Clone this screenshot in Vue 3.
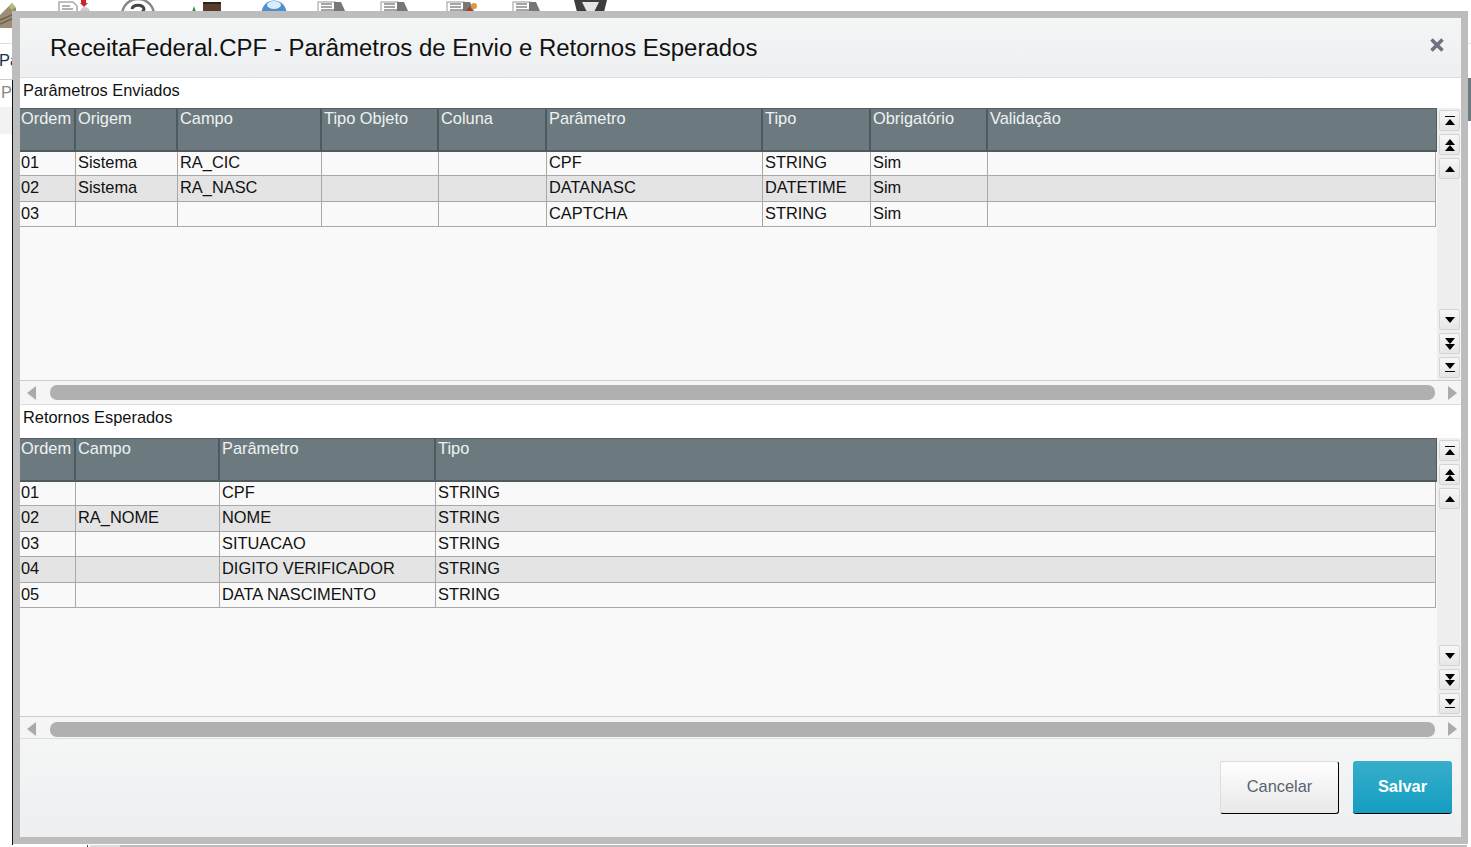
<script setup>
const sent = {
  cols: [56, 102, 144, 117, 108, 216, 108, 117, 448],
  head: ['Ordem', 'Origem', 'Campo', 'Tipo Objeto', 'Coluna', 'Parâmetro', 'Tipo', 'Obrigatório', 'Validação'],
  rows: [
    ['01', 'Sistema', 'RA_CIC', '', '', 'CPF', 'STRING', 'Sim', ''],
    ['02', 'Sistema', 'RA_NASC', '', '', 'DATANASC', 'DATETIME', 'Sim', ''],
    ['03', '', '', '', '', 'CAPTCHA', 'STRING', 'Sim', '']
  ]
}

const expected = {
  cols: [56, 144, 216, 1000],
  head: ['Ordem', 'Campo', 'Parâmetro', 'Tipo'],
  rows: [
    ['01', '', 'CPF', 'STRING'],
    ['02', 'RA_NOME', 'NOME', 'STRING'],
    ['03', '', 'SITUACAO', 'STRING'],
    ['04', '', 'DIGITO VERIFICADOR', 'STRING'],
    ['05', '', 'DATA NASCIMENTO', 'STRING']
  ]
}

const panels = [
  { title: 'Parâmetros Enviados', table: sent, height: 272 },
  { title: 'Retornos Esperados', table: expected, height: 278 }
]

const gridCols = (cols) => cols.map((c) => c + 'px').join(' ')
</script>

<template>
  <div class="page">
    <!-- what shows around the dialog -->
    <div class="backdrop">
      <svg class="toolbar" width="620" height="32" viewBox="0 0 620 32">
        <path d="M0 15 12 3l4 5v20L0 28z" fill="#9c8d74" />
        <path d="M9 7l3-4 3 4-3 3z" fill="#a9c46c" />
        <path d="M0 20l14-6M0 24l14-6" stroke="#6f6350" stroke-width="1.5" />

        <path d="M59 12V2h14l4 4v6" fill="#fff" stroke="#aaa" stroke-width="1.5" />
        <path d="M62 6h8M62 9h11" stroke="#999" stroke-width="1.5" />
        <path d="M81 0h5v3h2l-4 4-4-4h1z" fill="#c8262c" />
        <circle cx="85" cy="12" r="5" fill="#ccc" />

        <circle cx="138" cy="15" r="16" fill="#fff" stroke="#888" stroke-width="2.5" />
        <path d="M132 9c1-5 11-5 12 0 0 2-2 3-3 4" fill="none" stroke="#444" stroke-width="3" />

        <path d="M192 12l2-6 2 6z" fill="#3c8a3c" />
        <rect x="203" y="2" width="18" height="10" fill="#5b3d2b" />
        <rect x="203" y="2" width="18" height="2" fill="#2d2520" />

        <circle cx="274" cy="13" r="12.5" fill="#4f8fd0" />
        <ellipse cx="274" cy="5" rx="7" ry="4" fill="#dcecf8" />

        <g v-for="x in [318, 381, 447, 513]" :key="x">
          <path :d="`M${x} 12V2h17l4 6v4`" fill="#fff" stroke="#bbb" stroke-width="1.5" />
          <path :d="`M${x + 3} 4h11M${x + 3} 7h11M${x + 3} 10h13`" stroke="#888" stroke-width="1.3" />
          <path :d="`M${x + 16} 2l7 0 4 9h-11z`" fill="#777" />
        </g>
        <path d="M465 12l5-6 3 6z" fill="#b33a24" />
        <circle cx="474" cy="6" r="3" fill="#d99a3a" />

        <path d="M574 0h33l-3 12h-27z" fill="#3e3e3e" />
        <path d="M582 2h17l-5 10h-7z" fill="#e4e4e4" />
      </svg>
      <div class="hline top-left"></div>
      <div class="tab-text">Pa</div>
      <div class="hline mid-left"></div>
      <div class="search-text">P</div>
      <div class="side-block"></div>
      <div class="hline top-right"></div>
      <div class="side-head"></div>
      <div class="bottom-edge"></div>
    </div>

    <div class="modal">
      <header class="modal-head">
        <h1>ReceitaFederal.CPF - Parâmetros de Envio e Retornos Esperados</h1>
        <svg class="close" width="14" height="14" viewBox="0 0 14 14">
          <path d="M1.5 1.5l11 11M12.5 1.5l-11 11" stroke="#6b7380" stroke-width="3.6" />
        </svg>
      </header>

      <section v-for="(p, n) in panels" :key="p.title" class="panel" :class="{ second: n === 1 }">
        <div class="panel-title">{{ p.title }}</div>
        <div class="browse" :style="{ height: p.height + 'px' }">
          <div class="grid">
            <div class="row head" :style="{ gridTemplateColumns: gridCols(p.table.cols) }">
              <div v-for="h in p.table.head" :key="h" class="cell">{{ h }}</div>
            </div>
            <div
              v-for="(r, i) in p.table.rows"
              :key="i"
              class="row"
              :class="{ odd: i % 2 === 1 }"
              :style="{ gridTemplateColumns: gridCols(p.table.cols) }"
            >
              <div v-for="(c, j) in r" :key="j" class="cell">{{ c }}</div>
            </div>
          </div>
          <div class="vscroll">
            <div class="btn-group">
              <button class="sb"><span class="tri up bar-top"></span></button>
              <button class="sb"><span class="tri up"></span><span class="tri up"></span></button>
              <button class="sb"><span class="tri up"></span></button>
            </div>
            <div class="btn-group">
              <button class="sb"><span class="tri down"></span></button>
              <button class="sb"><span class="tri down"></span><span class="tri down"></span></button>
              <button class="sb"><span class="tri down bar-bottom"></span></button>
            </div>
          </div>
        </div>
        <div class="hscroll">
          <span class="arrow left"></span>
          <div class="thumb"></div>
          <span class="arrow right"></span>
        </div>
      </section>

      <footer class="modal-foot">
        <button class="btn cancel">Cancelar</button>
        <button class="btn save">Salvar</button>
      </footer>
    </div>
    <div class="modal-edge"></div>
  </div>
</template>

<style>
html, body {
  margin: 0;
  background: #fff;
  overflow: hidden;
}
</style>

<style scoped>
.page {
  position: relative;
  width: 1471px;
  height: 847px;
  overflow: hidden;
  font-family: "Liberation Sans", Arial, sans-serif;
  font-size: 16.4px;
  color: #111;
}
.backdrop > * {
  position: absolute;
}
.toolbar {
  left: 0;
  top: 0;
}
.hline {
  height: 1px;
  background: #ddd;
}
.top-left {
  left: 0;
  top: 43px;
  width: 12px;
}
.mid-left {
  left: 0;
  top: 79px;
  width: 12px;
  background: #ccc;
}
.top-right {
  left: 1467px;
  top: 43px;
  width: 4px;
}
.tab-text {
  left: -1px;
  top: 51px;
  color: #14324a;
}
.search-text {
  left: 1px;
  top: 83px;
  color: #888;
}
.side-block {
  left: 0;
  top: 107px;
  width: 12px;
  height: 27px;
  background: #f2f2f2;
}
.side-head {
  left: 1467px;
  top: 78px;
  width: 4px;
  height: 43px;
  background: #6c7a7f;
}
.bottom-edge {
  left: 87px;
  top: 845px;
  width: 1380px;
  height: 2px;
  background: linear-gradient(90deg, #444 1px, #fff 1px, #fff 3px, #ddd 3px, #ddd 33px, #bdbdbd 33px);
}
.modal {
  position: absolute;
  left: 12px;
  top: 11px;
  width: 1441px;
  height: 819px;
  display: flex;
  flex-direction: column;
  border: 7px solid #bdbdbd;
  border-left-width: 8px;
  background: #f9f9f9;
}
.modal-edge {
  position: absolute;
  left: 12px;
  top: 80px;
  width: 1px;
  height: 765px;
  background: #111;
}
.modal-head {
  height: 59px;
  flex: none;
  display: flex;
  align-items: center;
  justify-content: space-between;
  padding: 0 17px 0 30px;
  background: linear-gradient(#f4f5f5, #eeeff1);
  border-bottom: 1px solid #ddd;
}
.modal-head h1 {
  margin: 0;
  font-size: 23.97px;
  font-weight: 400;
  color: #111;
}
.close {
  margin-top: -6px;
}
.panel {
  flex: none;
}
.panel-title {
  height: 30px;
  line-height: 25px;
  padding-left: 3px;
  background: #fff;
}
.second .panel-title {
  height: 33px;
}
.browse {
  display: flex;
  background: #f9f9f9;
}
.grid {
  width: 1417px;
  flex: none;
}
.row {
  display: grid;
  height: 25.4px;
  box-sizing: border-box;
  border-bottom: 1px solid #a8a8a8;
  border-right: 1px solid #a8a8a8;
  margin-right: 1px;
  background: #f9f9f9;
}
.row.odd {
  background: #e4e4e4;
}
.row.head {
  position: relative;
  height: 44px;
  margin: 0 0 -1px;
  background: #6c7a7f;
  color: #eef2f2;
  border-top: 1px solid #555f63;
  border-bottom: 2px solid #4f5a5e;
  border-right: 1px solid #4f5a5e;
}
.cell {
  box-sizing: border-box;
  padding: 2px 0 0 2px;
  border-right: 1px solid #a8a8a8;
  white-space: nowrap;
  overflow: hidden;
  line-height: 18px;
}
.row.head .cell {
  padding-top: 0;
  border-right: 2px solid #4f5a5e;
}
.cell:first-child {
  padding-left: 1px;
}
.cell:last-child {
  border-right: 0 !important;
}
.vscroll {
  width: 23px;
  flex: none;
  display: flex;
  flex-direction: column;
  justify-content: space-between;
  padding: 2px 0;
  background: #eee;
  box-sizing: border-box;
}
.btn-group {
  display: flex;
  flex-direction: column;
  gap: 3px;
  align-items: flex-end;
}
.sb {
  width: 21px;
  height: 21px;
  padding: 0;
  display: flex;
  flex-direction: column;
  align-items: center;
  justify-content: center;
  background: linear-gradient(#f7f7f7, #e6e6e6);
  border: 1px solid #d4d4d4;
  border-radius: 2px;
}
.tri {
  display: block;
  width: 0;
  height: 0;
  border-left: 5px solid transparent;
  border-right: 5px solid transparent;
}
.tri.up {
  border-bottom: 6px solid #000;
}
.tri.down {
  border-top: 6px solid #000;
}
.tri.bar-top {
  position: relative;
  margin-top: 3px;
}
.tri.bar-top::before {
  content: "";
  position: absolute;
  left: -5px;
  top: -3px;
  width: 10px;
  height: 1px;
  background: #000;
}
.tri.bar-bottom {
  position: relative;
  margin-bottom: 3px;
}
.tri.bar-bottom::after {
  content: "";
  position: absolute;
  left: -5px;
  top: 2px;
  width: 10px;
  height: 1px;
  background: #000;
}
.hscroll {
  height: 25px;
  box-sizing: border-box;
  display: flex;
  align-items: center;
  padding: 0 4px 0 7px;
  background: #f5f5f5;
  border-top: 1px solid #ccc;
  border-bottom: 1px solid #ddd;
}
.second .hscroll {
  height: 23px;
  padding-top: 3px;
}
.thumb {
  flex: 1;
  height: 15px;
  margin: 0 13px 0 14px;
  border-radius: 7px;
  background: #b0b0b0;
}
.arrow {
  width: 0;
  height: 0;
  border-top: 7px solid transparent;
  border-bottom: 7px solid transparent;
}
.arrow.left {
  border-right: 9px solid #aaa;
}
.arrow.right {
  border-left: 9px solid #aaa;
}
.modal-foot {
  flex: 1;
  display: flex;
  justify-content: flex-end;
  align-items: flex-start;
  gap: 14px;
  padding: 22px 9px 0 0;
  background: linear-gradient(#f4f5f5, #eeeff1);
}
.btn {
  height: 53px;
  font: inherit;
  padding: 0 0 2px;
  box-sizing: border-box;
  border-radius: 3px;
}
.cancel {
  width: 119px;
  color: #5a6270;
  background: linear-gradient(#fff, #e8e8e8);
  border: 1px solid #ddd;
  border-right: 1px solid #000;
  border-bottom: 1px solid #000;
}
.save {
  width: 99px;
  color: #fff;
  font-weight: 700;
  background: linear-gradient(#38aeca, #139ec1);
  border: 0;
  border-bottom: 1px solid #000;
}
</style>
